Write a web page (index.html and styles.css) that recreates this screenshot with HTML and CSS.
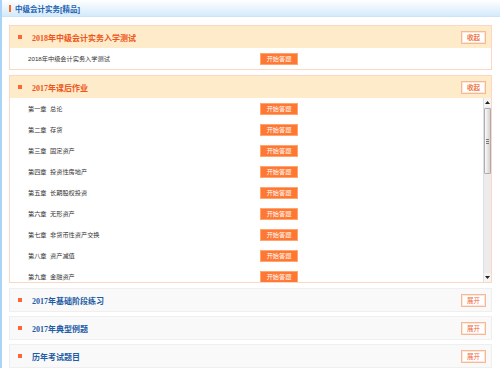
FILE: index.html
```html
<!DOCTYPE html>
<html lang="zh-CN">
<head>
<meta charset="utf-8">
<title>中级会计实务[精品]</title>
<link rel="stylesheet" href="styles.css">
</head>
<body>
<div class="page">
  <div class="topbar"><span class="mark"></span><h1>中级会计实务[精品]</h1></div>
  <div class="content">
    <section class="panel open">
      <div class="panel-head"><span class="dot"></span><h2>2018年中级会计实务入学测试</h2><button class="toggle">收起</button></div>
      <div class="list">
        <div class="row"><span class="name">2018年中级会计实务入学测试</span><button class="start">开始答题</button></div>
      </div>
    </section>
    <section class="panel open">
      <div class="panel-head"><span class="dot"></span><h2>2017年课后作业</h2><button class="toggle">收起</button></div>
      <div class="scroll-wrap">
        <div class="list scroll">
          <div class="row"><span class="name">第一章&nbsp;&nbsp;总论</span><button class="start">开始答题</button></div>
          <div class="row"><span class="name">第二章&nbsp;&nbsp;存货</span><button class="start">开始答题</button></div>
          <div class="row"><span class="name">第三章&nbsp;&nbsp;固定资产</span><button class="start">开始答题</button></div>
          <div class="row"><span class="name">第四章&nbsp;&nbsp;投资性房地产</span><button class="start">开始答题</button></div>
          <div class="row"><span class="name">第五章&nbsp;&nbsp;长期股权投资</span><button class="start">开始答题</button></div>
          <div class="row"><span class="name">第六章&nbsp;&nbsp;无形资产</span><button class="start">开始答题</button></div>
          <div class="row"><span class="name">第七章&nbsp;&nbsp;非货币性资产交换</span><button class="start">开始答题</button></div>
          <div class="row"><span class="name">第八章&nbsp;&nbsp;资产减值</span><button class="start">开始答题</button></div>
          <div class="row"><span class="name">第九章&nbsp;&nbsp;金融资产</span><button class="start">开始答题</button></div>
          <div class="row"><span class="name">第十章&nbsp;&nbsp;负债</span><button class="start">开始答题</button></div>
          <div class="row"><span class="name">第十一章&nbsp;&nbsp;借款费用</span><button class="start">开始答题</button></div>
          <div class="row"><span class="name">第十二章&nbsp;&nbsp;债务重组</span><button class="start">开始答题</button></div>
          <div class="row"><span class="name">第十三章&nbsp;&nbsp;或有事项</span><button class="start">开始答题</button></div>
          <div class="row"><span class="name">第十四章&nbsp;&nbsp;收入</span><button class="start">开始答题</button></div>
          <div class="row"><span class="name">第十五章&nbsp;&nbsp;所得税</span><button class="start">开始答题</button></div>
          <div class="row"><span class="name">第十六章&nbsp;&nbsp;外币折算</span><button class="start">开始答题</button></div>
          <div class="row"><span class="name">第十七章&nbsp;&nbsp;财务报告</span><button class="start">开始答题</button></div>
          <div class="row"><span class="name">第十八章&nbsp;&nbsp;会计政策、会计估计变更和差错更正</span><button class="start">开始答题</button></div>
          <div class="row"><span class="name">第十九章&nbsp;&nbsp;资产负债表日后事项</span><button class="start">开始答题</button></div>
          <div class="row"><span class="name">第二十章&nbsp;&nbsp;企业合并</span><button class="start">开始答题</button></div>
          <div class="row"><span class="name">第二十一章&nbsp;&nbsp;事业单位会计</span><button class="start">开始答题</button></div>
          <div class="row"><span class="name">第二十二章&nbsp;&nbsp;民间非营利组织会计</span><button class="start">开始答题</button></div>
        </div>
        <div class="scrollbar" aria-hidden="true">
          <span class="sb-btn"><svg width="5" height="3" viewBox="0 0 5 3"><path d="M0 3L2.5 0L5 3Z" fill="#222"/></svg></span>
          <span class="sb-track"><span class="sb-thumb"><span class="sb-grip"></span></span></span>
          <span class="sb-btn"><svg width="5" height="3" viewBox="0 0 5 3"><path d="M0 0L2.5 3L5 0Z" fill="#222"/></svg></span>
        </div>
      </div>
    </section>
    <section class="panel closed">
      <div class="panel-head"><span class="dot"></span><h2>2017年基础阶段练习</h2><button class="toggle">展开</button></div>
    </section>
    <section class="panel closed">
      <div class="panel-head"><span class="dot"></span><h2>2017年典型例题</h2><button class="toggle">展开</button></div>
    </section>
    <section class="panel closed">
      <div class="panel-head"><span class="dot"></span><h2>历年考试题目</h2><button class="toggle">展开</button></div>
    </section>
  </div>
</div>
</body>
</html>
```
FILE: styles.css
```css
* { box-sizing: border-box; }
html, body { margin: 0; padding: 0; background: #fff; }
body {
  font-family: "Liberation Sans", "Noto Sans CJK SC", sans-serif;
  color: #333;
  overflow: hidden;
}
.page {
  border-left: 2px solid #a9d4f5;
  min-height: 368px;
}
.topbar {
  height: 17px;
  display: flex;
  align-items: center;
  padding-left: 7px;
  background: linear-gradient(#ffffff, #d4eafb);
  border-bottom: 1px solid #c9e3f8;
}
.topbar .mark {
  width: 2px;
  height: 7px;
  background: #ff6a1a;
  margin-right: 4px;
}
.topbar h1 {
  margin: 0;
  font-size: 7.5px;
  font-weight: bold;
  color: #1d61b0;
  font-family: "Liberation Sans", "Noto Sans CJK SC", sans-serif;
}
.content {
  padding: 8px 8px 0 7px;
}
.panel {
  border: 1px solid #fbd8c4;
  margin-bottom: 5px;
}
.panel-head {
  height: 22px;
  display: flex;
  align-items: center;
  padding: 0 5px 0 8px;
  background: #feebca;
}
.dot {
  width: 4px;
  height: 4px;
  background: #ff6633;
  margin-right: 10px;
}
.panel-head h2 {
  margin: 0;
  flex: 1;
  font-size: 8px;
  font-weight: bold;
  color: #ee5518;
  font-family: "Liberation Serif", "Noto Sans CJK SC", serif;
}
.toggle {
  width: 25px;
  height: 13px;
  padding: 0;
  border: 1px solid #f7b896;
  box-shadow: inset 0 0 0 1px #fde6d8;
  background: #fff;
  color: #ef7440;
  font-size: 6.5px;
  font-weight: bold;
  font-family: "Noto Sans CJK SC", sans-serif;
  line-height: 11px;
}
.list { background: #fff; }
.scroll-wrap {
  display: flex;
  height: 184px;
}
.list.scroll {
  flex: 1;
  overflow: hidden;
}
.row {
  height: 21px;
  display: flex;
  align-items: center;
  padding-left: 18px;
}
.name {
  width: 232px;
  font-size: 6.2px;
  color: #333;
  white-space: nowrap;
  font-family: "Liberation Sans", "Noto Sans CJK SC", sans-serif;
}
.start {
  width: 38px;
  height: 12px;
  padding: 0;
  border: 1px solid #ffa56f;
  background: #ff7833;
  color: #fff;
  font-size: 6.2px;
  font-family: "Noto Sans CJK SC", sans-serif;
  line-height: 10px;
}
.scrollbar {
  width: 8px;
  display: flex;
  flex-direction: column;
  background: #ececec;
  border-left: 1px solid #e0e0e0;
}
.sb-btn {
  height: 9px;
  display: flex;
  align-items: center;
  justify-content: center;
  background: #f4f4f4;
}
.sb-track {
  flex: 1;
  padding-top: 1px;
}
.sb-thumb {
  display: flex;
  align-items: center;
  justify-content: center;
  height: 66px;
  background: linear-gradient(to right, #fafafa, #d2d2d2);
  border: 1px solid #adadad;
  border-radius: 1px;
}
.sb-grip {
  width: 3px;
  height: 5px;
  background: repeating-linear-gradient(#777 0 1px, transparent 1px 2px);
}
.panel.closed {
  border-color: #efefef;
  margin-bottom: 4px;
}
.panel.closed .panel-head {
  background: #f9f9f9;
}
.panel.closed h2 {
  color: #1e5ca6;
}
.panel.closed .toggle {
  color: #f0663a;
  font-weight: normal;
}
```
